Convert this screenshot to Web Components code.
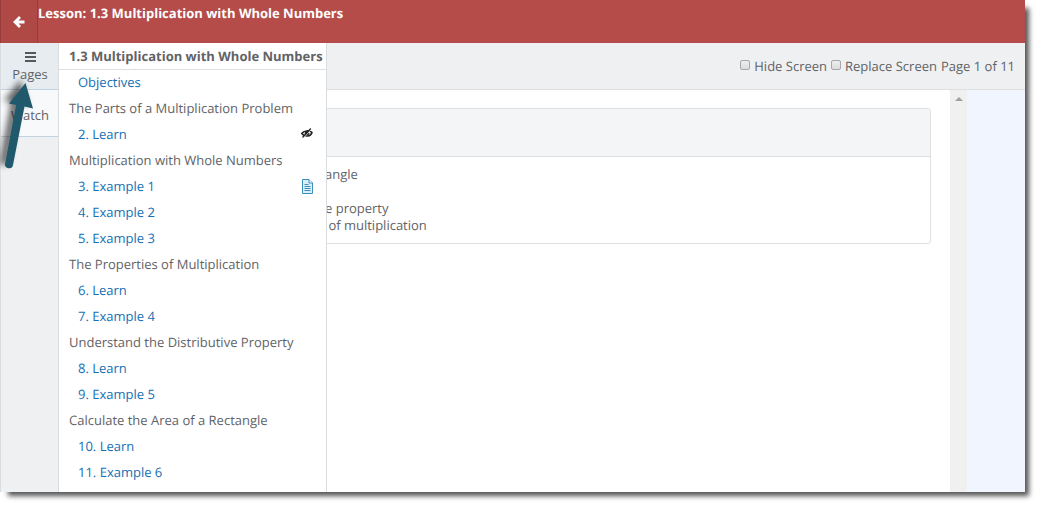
<!DOCTYPE html>
<html lang="en">
<head>
<meta charset="utf-8">
<title>Lesson: 1.3 Multiplication with Whole Numbers</title>
<style>
  body { margin: 0; background: #fff; font: 13px/18px "Open Sans", sans-serif; color: #5f6366; text-rendering: geometricPrecision; }
</style>
</head>
<body>
<lesson-app></lesson-app>

<template id="lesson-app">
  <style>
    :host { display: block; padding: 0 15px 15px 0; }
    .frame { box-shadow: 6px 6px 5px -2px #555; background: #fff; }
    .body { display: flex; position: relative; min-height: 449px; }
    .main { flex: 1; min-width: 0; display: flex; flex-direction: column; }
    .stage { flex: 1; display: flex; }
    .page { flex: 1; min-width: 0; padding: 18px 19px 18px 20px; }
    .gutter { width: 58px; background: #f0f5ff; }
    page-menu { position: absolute; top: 0; left: 59px; bottom: 0; width: 268px; }
    pointer-arrow { position: absolute; top: 34px; left: 0; }
  </style>
  <div class="frame">
    <lesson-header>Lesson: 1.3 Multiplication with Whole Numbers</lesson-header>
    <div class="body">
      <side-rail></side-rail>
      <div class="main">
        <page-toolbar></page-toolbar>
        <div class="stage">
          <div class="page">
            <content-card>
              <div>angle</div>
              <div>&nbsp;</div>
              <div>e property</div>
              <div>&nbsp;of multiplication</div>
            </content-card>
          </div>
          <scroll-track></scroll-track>
          <div class="gutter"></div>
        </div>
      </div>
      <page-menu></page-menu>
      <pointer-arrow></pointer-arrow>
    </div>
  </div>
</template>

<template id="lesson-header">
  <style>
    :host { display: flex; height: 43px; background: #b54c49; color: #fff; }
    button { width: 38px; padding: 0; border: solid #983d3b; border-width: 0 1px; background: #ae4946; color: inherit; display: flex; align-items: center; justify-content: center; }
    h1 { margin: 0; padding-top: 4px; font-size: 13px; line-height: 18px; font-weight: 700; }
  </style>
  <button type="button" aria-label="Back">
    <svg width="12" height="12" viewBox="0 0 12 12" fill="none" stroke="#fff" stroke-width="2.8"><path d="M7 1L2 6l5 5M2.500 6H11.500"/></svg>
  </button>
  <h1><slot></slot></h1>
</template>

<template id="side-rail">
  <style>
    :host { display: block; box-sizing: border-box; width: 59px; flex: none; background: #eff0f2; border: solid #dadde0; border-width: 0 1px; }
    button { display: flex; flex-direction: column; align-items: center; justify-content: center; gap: 3px; box-sizing: border-box; width: 100%; height: 47px; padding: 3px 0 0 1px; border: 0; border-bottom: 1px solid #c3d3df; background: #f7f9fb; color: inherit; font: inherit; }
    button.current { background: #e7ecf0; }
    svg { display: block; }
  </style>
  <button type="button" class="current">
    <svg width="11" height="10" viewBox="0 0 11 10" fill="#56595c"><path d="M0 0h11v2H0zM0 4h11v2H0zM0 8h11v2H0z"/></svg>
    <span>Pages</span>
  </button>
  <button type="button"><span>Watch</span></button>
</template>

<template id="page-toolbar">
  <style>
    :host { display: flex; align-items: center; justify-content: flex-end; gap: 4px; height: 46px; padding-right: 10px; background: #eff0f2; border-bottom: 1px solid #dddfe1; }
    label { display: flex; align-items: center; gap: 4px; }
    input { appearance: none; box-sizing: border-box; width: 10px; height: 10px; margin: 0 0 2px; border: 1px solid #a8a8a8; border-radius: 2px; background: linear-gradient(#eee, #dcdcdc); }
  </style>
  <label><input type="checkbox"><span>Hide Screen</span></label>
  <label><input type="checkbox"><span>Replace Screen</span></label>
  <span>Page 1 of 11</span>
</template>

<template id="content-card">
  <style>
    :host { display: block; border: 1px solid #dddfe1; border-radius: 3px; overflow: hidden; line-height: 17px; }
    header { height: 47px; background: #f4f5f7; border-bottom: 1px solid #dddfe1; }
    section { padding: 9px 0 9px 245px; }
  </style>
  <header></header>
  <section><slot></slot></section>
</template>

<template id="scroll-track">
  <style>
    :host { display: flex; justify-content: center; width: 17px; padding-top: 7px; box-sizing: border-box; background: #f0f0f0; }
    svg { display: block; }
  </style>
  <svg width="8" height="4" viewBox="0 0 8 4" fill="#a0a0a0"><path d="M0 4L4 0l4 4z"/></svg>
</template>

<template id="page-menu">
  <style>
    :host { display: block; box-sizing: border-box; background: #fff; border-right: 1px solid #dadde0; }
    h2 { margin: 0; padding: 0 10px; height: 26px; font-size: 13px; line-height: 26px; font-weight: 700; border-bottom: 1px solid #dddfe1; white-space: nowrap; }
  </style>
  <h2>1.3 Multiplication with Whole Numbers</h2>
  <nav>
    <menu-row page>Objectives</menu-row>
    <menu-row>The Parts of a Multiplication Problem</menu-row>
    <menu-row page icon="hidden">2. Learn</menu-row>
    <menu-row>Multiplication with Whole Numbers</menu-row>
    <menu-row page icon="note">3. Example 1</menu-row>
    <menu-row page>4. Example 2</menu-row>
    <menu-row page>5. Example 3</menu-row>
    <menu-row>The Properties of Multiplication</menu-row>
    <menu-row page>6. Learn</menu-row>
    <menu-row page>7. Example 4</menu-row>
    <menu-row>Understand the Distributive Property</menu-row>
    <menu-row page>8. Learn</menu-row>
    <menu-row page>9. Example 5</menu-row>
    <menu-row>Calculate the Area of a Rectangle</menu-row>
    <menu-row page>10. Learn</menu-row>
    <menu-row page>11. Example 6</menu-row>
  </nav>
</template>

<template id="menu-row">
  <style>
    :host { display: flex; justify-content: space-between; align-items: center; box-sizing: border-box; height: 26px; padding: 0 13px 2px 10px; white-space: nowrap; }
    :host([page]) { padding-left: 19px; }
    a { color: #146fb3; text-decoration: none; }
    svg { display: block; }
  </style>
</template>

<template id="pointer-arrow">
  <style>
    :host { display: block; pointer-events: none; }
    svg { display: block; filter: drop-shadow(-5px -3px 3px rgba(0, 0, 0, .6)); }
  </style>
  <svg width="40" height="96" viewBox="0 77 40 96" fill="#20596b"><path d="M25.5 83L33 108.500L24.500 106.500L13 165a4 4 0 0 1-7.900-1.500L16 105L9 103.500z"/></svg>
</template>

<script>
  const rowIcons = {
    hidden: '<svg width="12" height="12" viewBox="0 0 12 12" fill="none" stroke="#222" role="img" aria-label="Hidden"><path d="M.8 5.500C2.500 2.500 8.500 2 11 4.500 10 8.500 3.500 9.500.8 5.500z" stroke-width="1.600"/><circle cx="6" cy="5.200" r="2.200" fill="#222" stroke="none"/><path d="M2.500 10L10.500 1.200" stroke="#fff" stroke-width=".8"/><path d="M1.500 9.500L9.800 .5" stroke-width="1.200"/></svg>',
    note: '<svg width="11" height="15" viewBox="0 0 11 15" fill="none" stroke="#3b8fb8" role="img" aria-label="Note"><path d="M.5.500h6.500l3.500 3.500v10.500H.5z" fill="#d9eef8"/><path d="M7 .5v3.500h3.500" fill="#fff"/><path d="M2.500 5.500h4M2.500 7.500h6M2.500 9.500h6M2.500 11.500h6"/></svg>'
  };

  function define(name, setup) {
    customElements.define(name, class extends HTMLElement {
      constructor() {
        super();
        this.attachShadow({ mode: 'open' }).append(document.getElementById(name).content.cloneNode(true));
      }
      connectedCallback() { if (setup && !this.ready) { this.ready = true; setup(this); } }
    });
  }

  define('menu-row', row => {
    const text = document.createElement(row.hasAttribute('page') ? 'a' : 'span');
    if (text.localName === 'a') text.href = '#';
    text.append(document.createElement('slot'));
    row.shadowRoot.append(text);
    const icon = rowIcons[row.getAttribute('icon')];
    if (icon) text.insertAdjacentHTML('afterend', icon);
  });
  ['lesson-header', 'side-rail', 'page-toolbar', 'content-card', 'scroll-track', 'page-menu', 'pointer-arrow', 'lesson-app']
    .forEach(name => define(name));
</script>
</body>
</html>
